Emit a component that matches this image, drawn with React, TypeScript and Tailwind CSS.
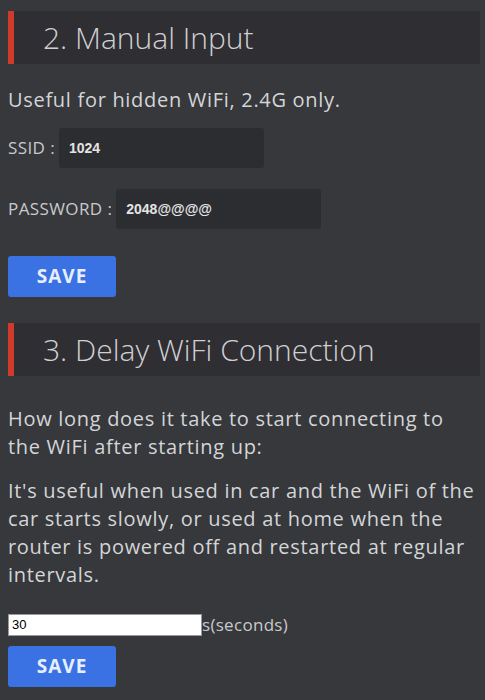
import React from "react";

function Header({ title }: { title: string }) {
  return (
    <div className="flex h-[53px] items-stretch pr-[5px]">
      <div className="w-[6px] bg-[#cf3a2b]" />
      <div className="flex flex-1 items-center bg-[#2e2e33] pl-[29px]">
        <span className="font-['Open_Sans',sans-serif] text-[30px] font-light leading-none text-[#d0d0d2]">
          {title}
        </span>
      </div>
    </div>
  );
}

function SaveButton() {
  return (
    <button className="flex h-[41px] w-[108px] items-center justify-center rounded-[3px] bg-[#3a72e3] font-['Open_Sans',sans-serif] text-[19px] font-bold tracking-[1px] text-[#e8eefc]">
      SAVE
    </button>
  );
}

export default function App() {
  return (
    <div className="min-h-[700px] bg-[#36383c] pl-[8px] pt-[11px] font-['Open_Sans',sans-serif] text-[#d4d5d7]">
      <Header title="2. Manual Input" />
      <p className="mt-[22px] text-[20px] leading-[28px] tracking-[0.7px]">Useful for hidden WiFi, 2.4G only.</p>
      <div className="mt-[14px] flex items-center">
        <span className="text-[17px] tracking-[0.4px] text-[#c9cacb]">SSID :</span>
        <div className="ml-[4px] flex h-[40px] w-[205px] items-center rounded-[3px] bg-[#2c2d31] pl-[10px] font-['Liberation_Sans',sans-serif] text-[14px] font-bold text-[#e4e4e4]">
          1024
        </div>
      </div>
      <div className="mt-[21px] flex items-center">
        <span className="text-[17px] tracking-[0.4px] text-[#c9cacb]">PASSWORD :</span>
        <div className="ml-[4px] flex h-[40px] w-[205px] items-center rounded-[3px] bg-[#2c2d31] pl-[10px] font-['Liberation_Sans',sans-serif] text-[14px] font-bold text-[#e4e4e4]">
          2048@@@@
        </div>
      </div>
      <div className="mt-[27px]">
        <SaveButton />
      </div>
      <div className="mt-[26px]">
        <Header title="3. Delay WiFi Connection" />
      </div>
      <p className="mt-[29px] pr-[4px] text-[20px] leading-[28px] tracking-[0.7px]">
        How long does it take to start connecting to the WiFi after starting up:
      </p>
      <p className="mt-[16px] pr-[4px] text-[20px] leading-[28px] tracking-[0.7px]">
        It's useful when used in car and the WiFi of the car starts slowly, or used at home when the router is powered off and restarted at regular intervals.
      </p>
      <div className="mt-[23px] flex items-center">
        <div className="flex h-[22px] w-[194px] items-center border border-[#9a9a9a] bg-white pl-[3px] font-['Liberation_Sans',sans-serif] text-[13px] text-black">
          30
        </div>
        <span className="text-[17px] tracking-[0.3px] text-[#c9cacb]">s(seconds)</span>
      </div>
      <div className="mt-[8px]">
        <SaveButton />
      </div>
    </div>
  );
}
